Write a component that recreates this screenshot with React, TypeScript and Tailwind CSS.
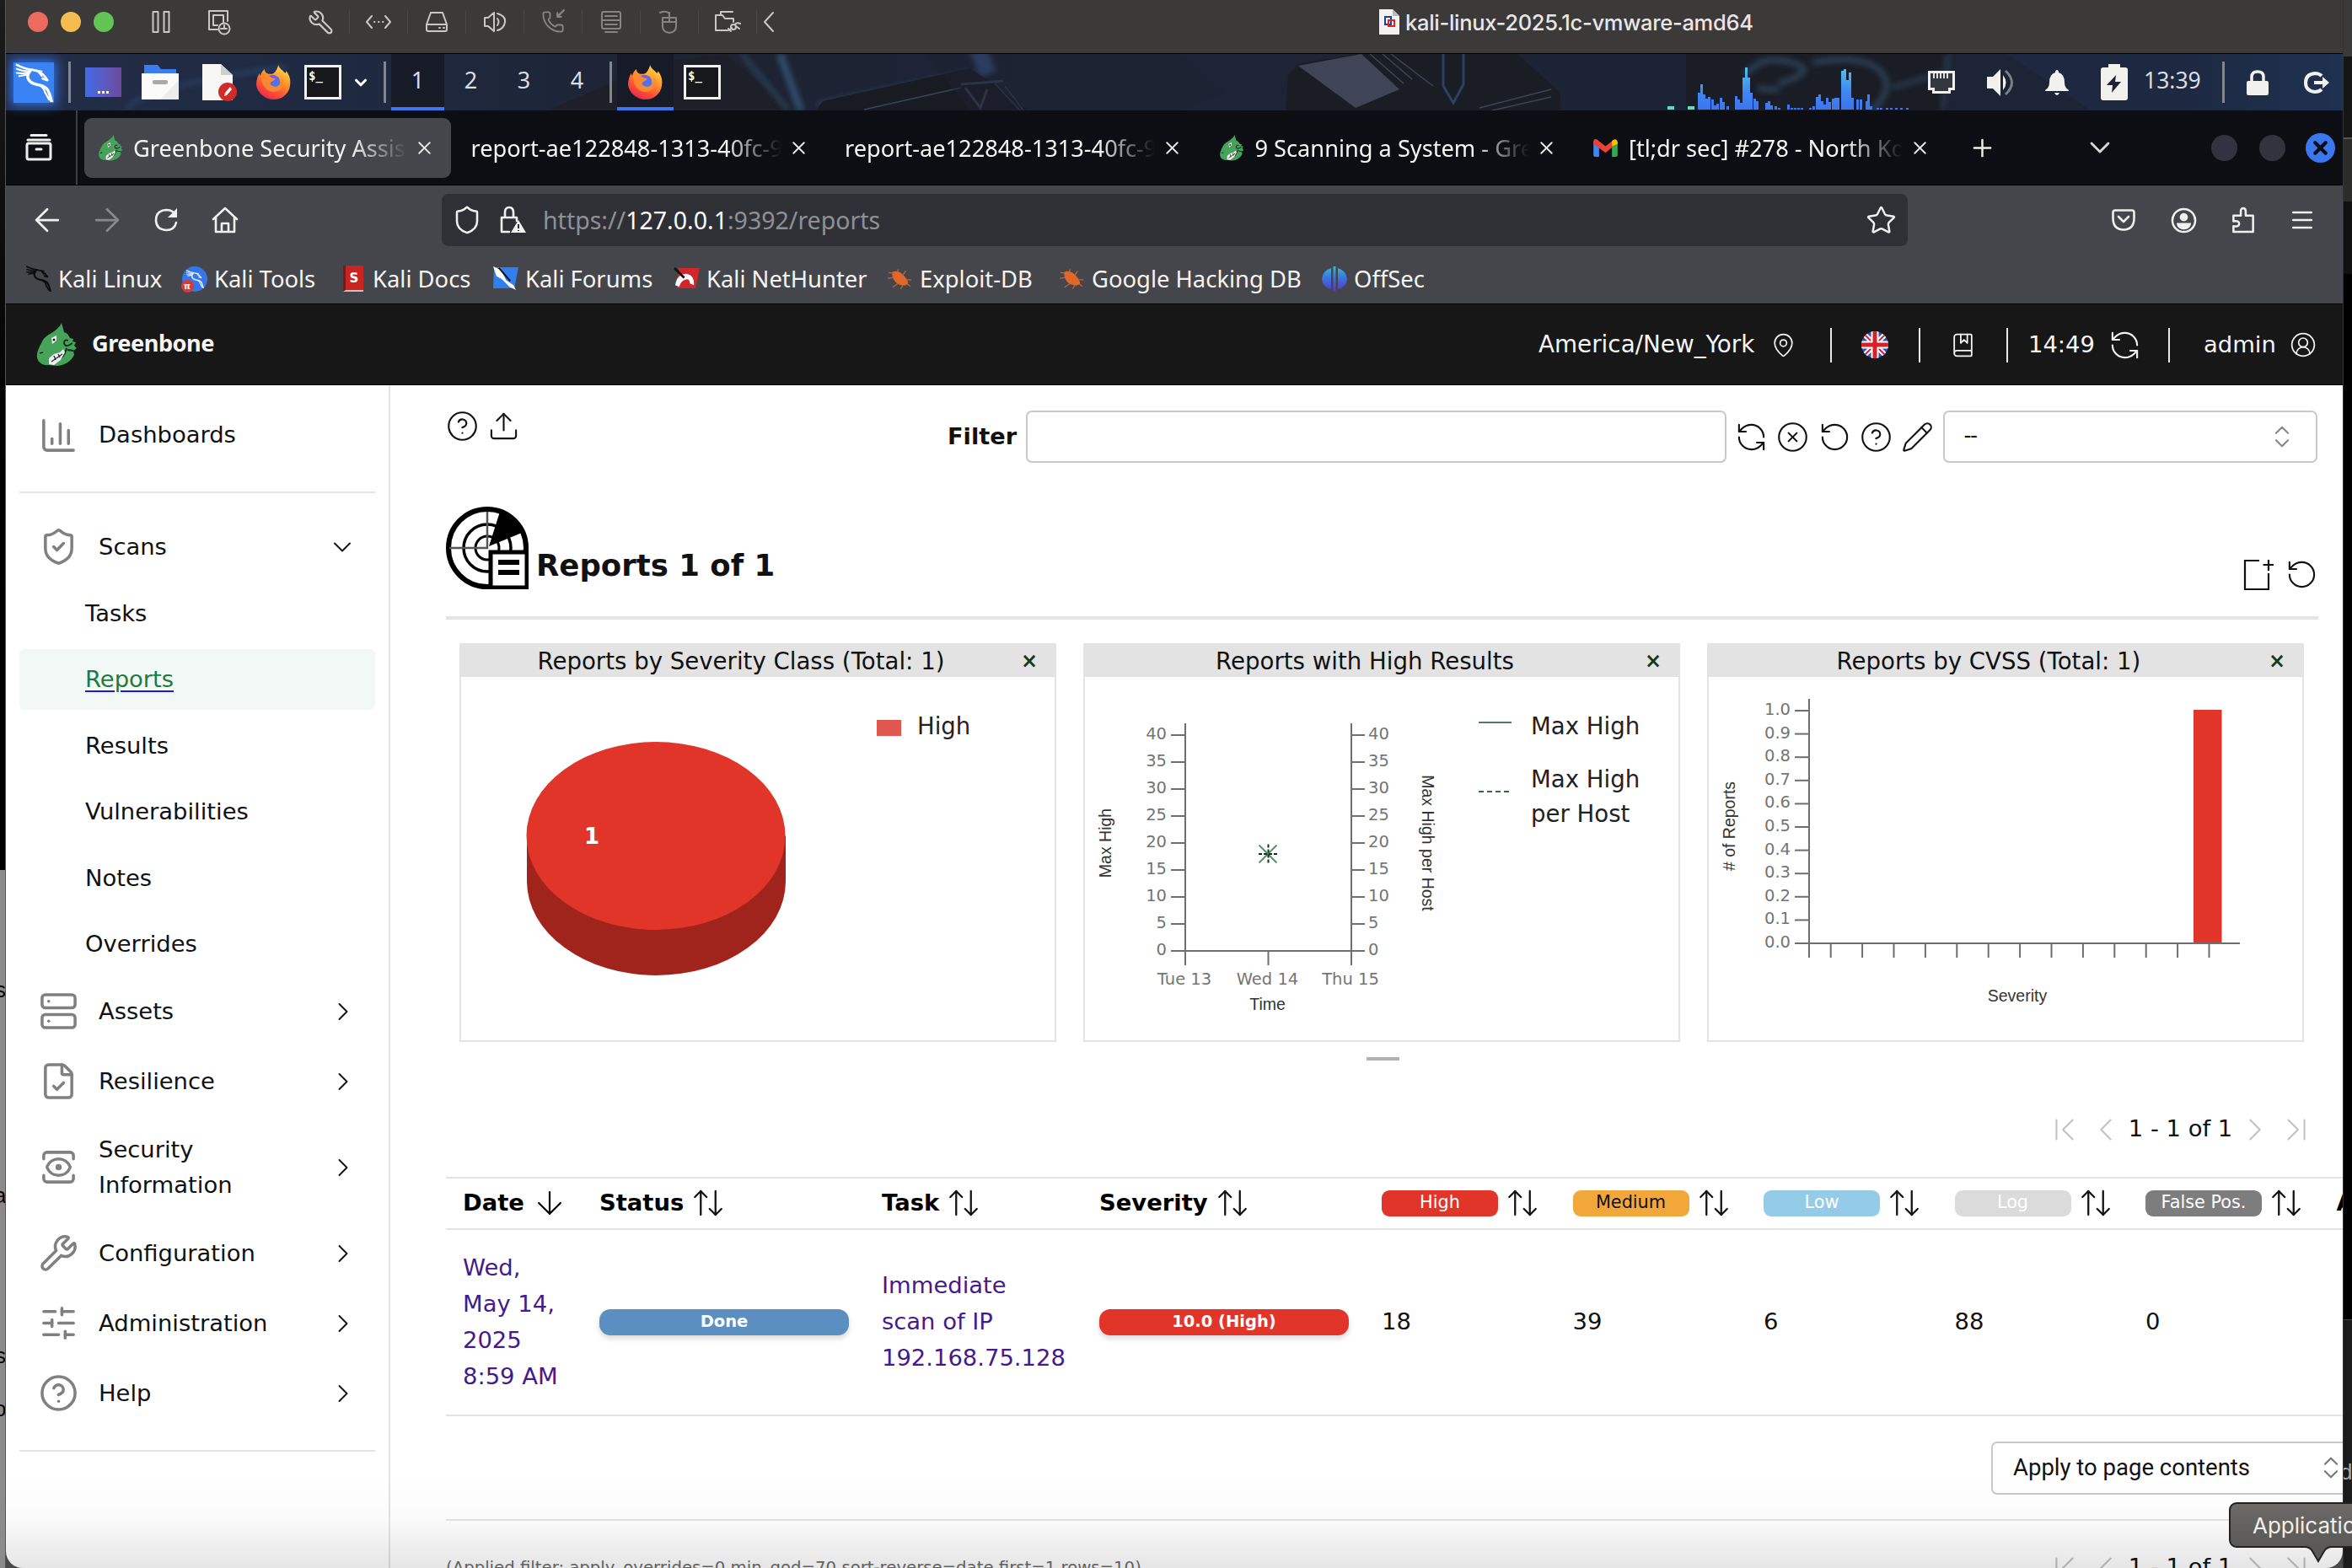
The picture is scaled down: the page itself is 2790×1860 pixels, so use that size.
import React from "react";
import {
  ArrowDown, ArrowLeft, ArrowRight, ArrowUpDown, ChartColumn, ChevronDown, ChevronFirst, ChevronLast,
  ChevronLeft, ChevronRight, ChevronsUpDown, CircleQuestionMark, CircleUserRound, CircleX, FileCheck,
  MapPin, Pencil, Phone, Plus, RefreshCcw, RotateCcw, Server, ShieldCheck, SlidersHorizontal, Star,
  Upload, View, Wrench, X, Shield, BookMarked,
} from "lucide-react";

const DEJAVU = "font-['DejaVu_Sans',sans-serif]";
const NOTO = "font-['Noto_Sans',sans-serif]";

/* ---------- drawn logos ---------- */

function KaliDragon({ className }: { className: string }) {
  return (
    <svg viewBox="0 0 48 48" className={className} fill="none" stroke="currentColor" strokeLinecap="round" strokeLinejoin="round">
      <path d="M3 2Q12 7 22 8L30 10Q37 14 41 21L35 19" strokeWidth="2.800" />
      <path d="M3 7Q10 10 18 10M3 12Q9 13 17 12M6 16Q10 15 16 14" strokeWidth="2.200" />
      <path d="M28 9l6 1M30 11l4 5" strokeWidth="2" />
      <path d="M20 9Q13 17 20 23 24 26 31 27 41 29 43 37 45 42 46 47" strokeWidth="3.600" />
      <path d="M31 27Q37 31 38 36L43 45" strokeWidth="2.400" />
    </svg>
  );
}

function Dragon({ className }: { className: string }) {
  return (
    <svg viewBox="0 0 48 52" className={className}>
      <path d="M30 0 33 11 37 13 40 18 44 19 43 22 47 23 45 27 48 30 44 33 45 38C42 45 33 51 24 51L15 50C8 51 2 47 1 41 0 33 5 27 8 20 13 13 26 10 30 0Z" fill="#46a35a" />
      <path d="M38 21Q33 19 33 24q1 4 5 3M36 30Q34 40 24 46M43 24l-5 3M44 33l-7-1" fill="none" stroke="#14241a" strokeWidth="1.800" />
      <path d="M18 18l6-3 0 6-5 4z" fill="#f4f4f4" />
      <circle cx="21" cy="20" r="1.500" fill="#111" />
      <path d="M15 42 21 37 28 35 32 31 34 35 29 44 21 50 15 49Z" fill="#f0f0f0" />
      <path d="M18 46 31 37M21 39l2 5M26 37l2 4" stroke="#333" strokeWidth="1.500" />
      <path d="M4 36l4-1" stroke="#14241a" strokeWidth="1.600" />
    </svg>
  );
}

function Firefox({ className, id }: { className: string; id: string }) {
  return (
    <svg viewBox="0 0 42 42" className={className}>
      <defs>
        <linearGradient id={id + "a"} x1="0.85" y1="0" x2="0.3" y2="1">
          <stop offset="0" stopColor="#ffe14d" />
          <stop offset="0.4" stopColor="#ff9a2e" />
          <stop offset="0.7" stopColor="#ff5535" />
          <stop offset="1" stopColor="#e8264f" />
        </linearGradient>
        <linearGradient id={id + "b"} x1="0" y1="0" x2="0.6" y2="1">
          <stop offset="0" stopColor="#8a52e8" />
          <stop offset="1" stopColor="#3b7df0" />
        </linearGradient>
      </defs>
      <path d="M27 0c1 5 5 6 8 10 2-1 1-3 1-3 5 6 6 12 5 18-1 10-10 17-20 17S1 34 0 24C0 18 2 13 4 10c0 2 1 3 1 3 1-4 4-7 5-8 0 3 2 5 5 6h3c3 0 6-2 9-11Z" fill={"url(#" + id + "a)"} />
      <circle cx="20" cy="21" r="9" fill={"url(#" + id + "b)"} />
      <path d="M6 13c4-2 8-1 12 2 2 1 4 1 5 2-1 3-5 3-6 5 0 3 4 5 8 4 5-2 8-7 5-12 5 5 4 12-1 16-6 5-15 3-19-3-3-4-4-9-4-14Z" fill="#ff8a2b" opacity="0.95" />
    </svg>
  );
}

function Terminal() {
  return (
    <div className="flex h-[41px] w-[44px] items-start border-[3px] border-[#f1f1ee] bg-[#17181b] pl-[2px] pt-[2px]">
      <span className="font-['DejaVu_Sans_Mono',monospace] text-[14px] font-bold leading-[16px] text-white">$_</span>
    </div>
  );
}

function Flag() {
  return (
    <svg viewBox="0 0 32 32" className="h-[32px] w-[32px]">
      <clipPath id="uk"><circle cx="16" cy="16" r="16" /></clipPath>
      <g clipPath="url(#uk)">
        <rect width="32" height="32" fill="#2e56b5" />
        <path d="M0 0 32 32M32 0 0 32" stroke="#fff" strokeWidth="6" />
        <path d="M0 0 32 32M32 0 0 32" stroke="#d8202c" strokeWidth="2" />
        <path d="M16 0v32M0 16h32" stroke="#fff" strokeWidth="9" />
        <path d="M16 0v32M0 16h32" stroke="#d8202c" strokeWidth="5" />
      </g>
    </svg>
  );
}

function Gmail() {
  return (
    <svg viewBox="0 0 30 22" className="h-[21px] w-[29px]">
      <path d="M0 3v17a2 2 0 0 0 2 2h5V9Z" fill="#4285f4" />
      <path d="M30 3v17a2 2 0 0 1-2 2h-5V9Z" fill="#34a853" />
      <path d="M0 3C0 0 3-1 5 1l10 8L25 1v8l-10 8L0 6Z" fill="#ea4335" />
      <path d="M23 9V2l2-1c2-2 5 0 5 3v2Z" fill="#fbbc04" />
    </svg>
  );
}

/* ---------- VM title bar ---------- */

const line = { fill: "none", stroke: "currentColor", strokeWidth: 2, strokeLinecap: "round" as const, strokeLinejoin: "round" as const };

function ToolSlot({ children, dim }: { children: React.ReactNode; dim?: boolean }) {
  return (
    <div className={"flex h-[28px] w-[69px] items-center justify-center border-r border-[#4a4848] " + (dim ? "text-[#858383]" : "text-[#c9c7c7]")}>
      {children}
    </div>
  );
}

function TitleBar() {
  return (
    <header className="flex h-[63px] items-start bg-[#3c3939] pt-[12px] text-[#c9c7c7]">
      <div className="ml-[26px] mt-[2px] flex gap-[15px]">
        <i className="block h-[24px] w-[24px] rounded-full bg-[#ed6a5e]" />
        <i className="block h-[24px] w-[24px] rounded-full bg-[#f5bd4f]" />
        <i className="block h-[24px] w-[24px] rounded-full bg-[#61c454]" />
      </div>
      <div className="flex w-[111px] justify-center">
        <svg viewBox="0 0 22 28" className="h-[28px] w-[22px]"><path {...line} d="M1.500 2h6v24h-6zM14.500 2h6v24h-6z" /></svg>
      </div>
      <svg viewBox="0 0 28 30" className="h-[30px] w-[28px]">
        <path {...line} d="M12 23H2V1h22v12M7 6h12v9M7 6v12h5" />
        <circle {...line} cx="20" cy="22" r="6.500" /><path {...line} d="M20 18v4h3M16 22h3" />
      </svg>
      <div className="ml-[72px] flex items-center">
        <ToolSlot><Wrench className="h-[31px] w-[31px] -scale-x-100" strokeWidth={1.7} /></ToolSlot>
        <ToolSlot><svg viewBox="0 0 30 20" className="h-[20px] w-[30px]"><path {...line} d="M7 3 1 10l6 7M23 3l6 7-6 7M10 10h.5M15 10h.5M20 10h.5" /></svg></ToolSlot>
        <ToolSlot><svg viewBox="0 0 28 26" className="h-[26px] w-[28px]"><path {...line} d="M7 2h14l5 14H2ZM2 16v6q0 2 2 2h20q2 0 2-2v-6M17 20h1M22 20h1" /></svg></ToolSlot>
        <ToolSlot><svg viewBox="0 0 28 26" className="h-[26px] w-[28px]"><path {...line} d="M2 8h4l7-6v22l-7-6H2ZM17 9q3 4 0 8M17 3q10 3 9 10-1 8-9 10" /></svg></ToolSlot>
        <ToolSlot dim><div className="relative"><Phone className="h-[28px] w-[28px]" strokeWidth={1.6} /><svg viewBox="0 0 10 10" className="absolute -top-px right-0 h-[11px] w-[11px]"><path {...line} d="M2 8 9 1M2 4v4h4" /></svg></div></ToolSlot>
        <ToolSlot dim><svg viewBox="0 0 26 26" className="h-[26px] w-[26px]"><path {...line} d="M4 1h18q2 0 2 2v16q0 2-2 2H4q-2 0-2-2V3q0-2 2-2ZM6 6h14M2 11h22M6 16h14M6 25h14" /></svg></ToolSlot>
        <ToolSlot dim><svg viewBox="0 0 24 28" className="h-[28px] w-[24px]"><path {...line} d="M4 14V9h16v10q0 7-8 8-8-1-8-8v-5h16M12 14V3M12 4Q8 0 1 3" /></svg></ToolSlot>
        <ToolSlot><svg viewBox="0 0 32 26" className="h-[26px] w-[32px]"><path {...line} d="M14 23H2V5h8l3 4h10v4M8 5V1h14M31 15q-4-2-6 1M15 23q5 0 6-3M26 18l4 3M17 21l3 3" /><circle {...line} cx="23" cy="19" r="3" /></svg></ToolSlot>
        <svg viewBox="0 0 14 26" className="ml-[7px] h-[26px] w-[14px]"><path {...line} d="M12 2 2 13l10 11" /></svg>
      </div>
      <div className="-mt-[2px] ml-[717px] flex items-center">
        <svg viewBox="0 0 24 30" className="h-[30px] w-[24px]">
          <path d="M0 0h16l8 8v22H0Z" fill="#f2f2f2" /><path d="M16 0v8h8Z" fill="#bbb" />
          <path d="M7 9h7v9H7z" fill="none" stroke="#1c3fa5" strokeWidth="2" /><path d="M11 13h7v7h-7z" fill="none" stroke="#e0261f" strokeWidth="2" />
        </svg>
        <span className="ml-[7px] pt-[2px] font-['Inter',sans-serif] text-[25.5px] font-medium leading-[30px] tracking-[-0.3px] text-[#e8e6e6]">kali-linux-2025.1c-vmware-amd64</span>
      </div>
    </header>
  );
}

/* ---------- desktop panel ---------- */

const cpu: [number, number][] = [
  [36, 20], [39, 30], [42, 18], [45, 13], [48, 15], [52, 12], [55, 5], [58, 7], [62, 14], [65, 9], [70, 4],
  [80, 16], [83, 12], [86, 8], [89, 38], [92, 50], [95, 38], [98, 20], [102, 13], [105, 10],
  [116, 8], [119, 10], [122, 5], [127, 4], [131, 2], [142, 6], [146, 2], [150, 2], [154, 2], [158, 2],
  [168, 2], [172, 4], [176, 15], [179, 18], [182, 10], [185, 6], [188, 14], [191, 9], [195, 13], [198, 14],
  [201, 14], [206, 46], [209, 48], [212, 35], [215, 44], [218, 14], [224, 12], [228, 12], [235, 10], [237, 18], [240, 4],
  [248, 2], [252, 2], [259, 2], [264, 2], [270, 2], [276, 2], [283, 2],
];

function Sep() {
  return <i className="block h-[49px] w-[3px] bg-[#85868c]" />;
}

function PanelArt() {
  return (
    <svg viewBox="7 0 2772 67" className="absolute inset-0 h-full w-full" preserveAspectRatio="none">
      <defs>
        <linearGradient id="pa" x1="0" x2="1">
          <stop offset="0" stopColor="#232d47" /><stop offset="0.12" stopColor="#1f2a42" /><stop offset="0.3" stopColor="#1d2333" />
          <stop offset="0.5" stopColor="#1e2435" /><stop offset="0.75" stopColor="#1c2334" /><stop offset="0.93" stopColor="#1c2436" /><stop offset="1" stopColor="#213556" />
        </linearGradient>
        <filter id="soft"><feGaussianBlur stdDeviation="3" /></filter>
      </defs>
      <rect x="7" width="2772" height="67" fill="url(#pa)" />
      <path d="M650 67 780 10 860 0 940 67Z" fill="#1d2029" />
      <g filter="url(#soft)">
        <path d="M880 0 935 67" stroke="#2c4159" strokeWidth="5" />
        <path d="M150 67Q160 40 340 15" stroke="#2a3d60" strokeWidth="5" fill="none" />
        <path d="M925 0 950 67" stroke="#33506f" strokeWidth="8" />
        <path d="M1160 -5 1172 24" stroke="#38568a" strokeWidth="20" />
        <path d="M970 60 1150 22" stroke="#2b4467" strokeWidth="5" />
      </g>
      <path d="M968 67 976 56 1150 17 1186 40 1220 67Z" fill="#191b22" />
      <path d="M1025 66 1140 40M1180 35l30 32M1192 38l22 29" stroke="#34455f" strokeWidth="1.500" />
      <path d="M1140 36l50-4M1145 40l18 24 8-22" stroke="#3a4458" strokeWidth="3" fill="none" />
      <path d="M1398 0 1454 46 1400 67H1150L1100 0Z" fill="#1d2132" opacity="0.5" />
      <path d="M1525 67 1528 25 1540 12 1610 0H1800L1850 45 1852 67Z" fill="#1b1d24" />
      <path d="M1540 14 1615 0 1660 42 1608 64Z" fill="#3f4556" />
      <path d="M1625 0 1665 35M1640 0l35 30M1650 0l50 38M1755 64l85-22M1770 67l70-16" stroke="#3c4558" strokeWidth="1.500" />
      <path d="M1712 0v38l12 20 12-22V0" stroke="#2b4065" strokeWidth="3" fill="none" />
      <path d="M2000 0h310v67h-310Z" fill="#1a1d26" />
      <g filter="url(#soft)">
        <path d="M2070 25q20-25 55-15t-15 25M2150 10q60-10 80 10t-10 47M2085 40q20 5 25 0" stroke="#2b3d52" strokeWidth="7" fill="none" />
        <path d="M2245 40l60-18M2310 0l-5 67" stroke="#2a3b50" strokeWidth="5" />
      </g>
      <path d="M2380 0 2480 67H2779V0Z" fill="#1e2d4b" opacity="0.5" />
    </svg>
  );
}

function Panel() {
  return (
    <div className="relative h-[67px] bg-[#1d2333]">
      <PanelArt />
      <div className="relative flex h-full items-center pl-[9px]">
        <div className="flex h-[48px] w-[48px] items-center justify-center bg-[#3a83f5] shadow-[0_0_12px_3px_#2f6fe0]">
          <KaliDragon className="h-[46px] w-[46px] text-white" />
        </div>
        <div className="ml-[17px]"><Sep /></div>
        <div className="ml-[17px] flex h-[35px] w-[43px] items-end justify-center bg-gradient-to-r from-[#3e6be8] to-[#6a4a9c] pb-[4px]">
          <span className="flex gap-[2px]"><i className="block h-[3px] w-[3px] bg-white" /><i className="block h-[3px] w-[3px] bg-white" /><i className="block h-[3px] w-[3px] bg-white" /></span>
        </div>
        <svg viewBox="0 0 44 41" className="ml-[24px] h-[41px] w-[44px]">
          <path d="M3 0h16l4 5h18v8H3Z" fill="#3b7cf0" /><path d="M0 10h44v31H0Z" fill="#fbfbfa" /><path d="M44 18v23H22Z" fill="#ececea" />
          <rect x="13" y="18" width="18" height="5" rx="2" fill="#a9a9a9" />
        </svg>
        <svg viewBox="0 0 41 44" className="ml-[28px] h-[44px] w-[41px]">
          <path d="M0 0h22l14 13v30H0Z" fill="#f7f7f5" /><path d="M22 0v13h14Z" fill="#cfcfcd" />
          <circle cx="30" cy="33" r="11" fill="#d22a26" /><path d="M26 38l1-4 6-7 2 3-6 7Z" fill="#fff" />
        </svg>
        <Firefox id="f1" className="ml-[23px] h-[43px] w-[41px]" />
        <div className="ml-[16px]"><Terminal /></div>
        <ChevronDown className="ml-[12px] h-[22px] w-[22px] text-white" strokeWidth={3.4} />
        <div className="ml-[16px]"><Sep /></div>
        <div className={"ml-[6px] flex h-full text-[27px] text-[#dcdde0] " + NOTO}>
          <span className="flex w-[63px] items-center justify-center border-b-4 border-[#3b78f0] bg-[#171b28]">1</span>
          <span className="flex w-[63px] items-center justify-center pb-[4px]">2</span>
          <span className="flex w-[63px] items-center justify-center pb-[4px]">3</span>
          <span className="flex w-[63px] items-center justify-center pb-[4px]">4</span>
        </div>
        <div className="ml-[7px]"><Sep /></div>
        <div className="ml-[6px] flex h-full w-[67px] items-center justify-center border-b-4 border-[#3b78f0] bg-[#171b28] pt-[3px]">
          <Firefox id="f2" className="h-[43px] w-[41px]" />
        </div>
        <div className="ml-[12px]"><Terminal /></div>
        <svg viewBox="0 0 290 67" className="ml-auto h-[67px] w-[290px]">
          <defs>
            <linearGradient id="cpu" x1="0" x2="0" y1="14" y2="66" gradientUnits="userSpaceOnUse">
              <stop offset="0" stopColor="#54c6ea" /><stop offset="0.6" stopColor="#3f86f2" /><stop offset="1" stopColor="#3d74ee" />
            </linearGradient>
          </defs>
          <path d="M0 62h8v4H0zM24 62h8v4h-8z" fill="#5be0c4" />
          {cpu.map(([x, h]) => <rect key={x} x={x} y={66 - h} width="3" height={h} fill="url(#cpu)" />)}
        </svg>
        <svg viewBox="0 0 32 27" className="ml-[19px] h-[27px] w-[32px]">
          <path d="M1.500 1.500h29v20h-5v4H6.500v-4h-5Z" fill="#33373f" stroke="#f1f1ee" strokeWidth="3" />
          <path d="M7 3v6M11 3v6M15 3v6M19 3v6M23 3v6" stroke="#f1f1ee" strokeWidth="1.800" />
        </svg>
        <svg viewBox="0 0 38 32" className="ml-[36px] h-[32px] w-[38px]">
          <path d="M2 9h7L18 0v32L9 23H2Z" fill="#f1f1ee" /><path d="M21 7q7 9 0 18" fill="#f1f1ee" /><path d="M24 2q15 14 0 28" stroke="#7b7f88" strokeWidth="3" fill="none" />
        </svg>
        <svg viewBox="0 0 28 30" className="ml-[33px] h-[30px] w-[28px]">
          <path d="M14 0q2 0 2 3 7 2 7 12 0 6 5 9v1H0v-1q5-3 5-9Q5 5 12 3q0-3 2-3ZM11 27h6q-1 3-3 3t-3-3Z" fill="#f1f1ee" />
        </svg>
        <svg viewBox="0 0 32 43" className="ml-[38px] h-[43px] w-[32px]">
          <path d="M9 0h14v4h6q3 0 3 3v33q0 3-3 3H3q-3 0-3-3V7q0-3 3-3h6Z" fill="#f1f1ee" /><path d="M18 13 7 25h7l-1 9 11-13h-7Z" fill="#1d2333" />
        </svg>
        <span className={"ml-[19px] w-[67px] whitespace-nowrap pb-[3px] text-[26.5px] text-[#dcdde0] " + NOTO}>13:39</span>
        <div className="ml-[26px]"><Sep /></div>
        <svg viewBox="0 0 26 30" className="ml-[26px] h-[30px] w-[26px]">
          <path d="M6 14V8q0-6 7-6t7 6v6" stroke="#f1f1ee" strokeWidth="3.500" fill="none" /><rect y="13" width="26" height="17" rx="2" fill="#f1f1ee" />
        </svg>
        <svg viewBox="0 0 30 26" className="ml-[42px] mr-[16px] h-[26px] w-[30px]">
          <path d="M21 5Q18 2 13 2 2 3 2 13t11 11q5 0 8-3" stroke="#f1f1ee" strokeWidth="4" fill="none" /><path d="M12 11h10V6l8 7-8 7v-5H12Z" fill="#f1f1ee" />
        </svg>
      </div>
    </div>
  );
}

/* ---------- browser chrome ---------- */

function Tab({ active, icon, title }: { active?: boolean; icon?: React.ReactNode; title: string }) {
  return (
    <div className={"flex h-[71px] w-[435px] shrink-0 items-center rounded-[9px] pl-[15px] " + (active ? "bg-[#45464b]" : "")}>
      {icon && <span className="mr-[12px] flex w-[31px] justify-center">{icon}</span>}
      <span className="min-w-0 flex-1 overflow-hidden whitespace-nowrap pt-[2px] text-[27.2px] text-[#f4f4f2] [mask-image:linear-gradient(to_right,#000_calc(100%-70px),transparent_calc(100%-4px))]">{title}</span>
      <X className="ml-[4px] mr-[19px] h-[25px] w-[25px] shrink-0 text-[#e8e8e6]" strokeWidth={1.8} />
    </div>
  );
}

function TabBar() {
  return (
    <div className={"flex h-[88px] items-center bg-[#0c0e13] " + NOTO}>
      <svg viewBox="0 0 32 32" className="ml-[23px] h-[32px] w-[32px] text-[#eeeeec]">
        <path {...line} strokeWidth={3} d="M7 1.500h18M3 7h26M4 11h24q2 0 2 2v15q0 2-2 2H4q-2 0-2-2V13q0-2 2-2ZM13 18h6" />
      </svg>
      <i className="ml-[28px] h-full w-[2px] bg-[#3c3e43]" />
      <div className="ml-[8px] flex gap-[8.5px]">
        <Tab active icon={<Dragon className="h-[31px] w-[30px]" />} title="Greenbone Security Assist" />
        <Tab title="report-ae122848-1313-40fc-9" />
        <Tab title="report-ae122848-1313-40fc-9" />
        <Tab icon={<Dragon className="h-[31px] w-[30px]" />} title="9 Scanning a System - Gree" />
        <Tab icon={<Gmail />} title="[tl;dr sec] #278 - North Ko" />
      </div>
      <Plus className="ml-[26px] h-[33px] w-[33px] text-[#eeeeec]" strokeWidth={1.8} />
      <ChevronDown className="ml-[103px] h-[40px] w-[40px] text-[#d8d8d6]" strokeWidth={1.7} />
      <i className="ml-[112px] block h-[31px] w-[31px] rounded-full bg-[#31343f]" />
      <i className="ml-[26px] block h-[31px] w-[31px] rounded-full bg-[#31343f]" />
      <span className="ml-[24px] flex h-[35px] w-[35px] items-center justify-center rounded-full bg-[#3b78f0]">
        <X className="h-[25px] w-[25px] text-[#0c0e13]" strokeWidth={4} />
      </span>
    </div>
  );
}

function Toolbar() {
  return (
    <div className={"flex h-[82px] items-center text-[#f0f0ee] " + NOTO}>
      <ArrowLeft className="ml-[27px] h-[44px] w-[44px]" strokeWidth={1.5} />
      <ArrowRight className="ml-[27px] h-[44px] w-[44px] text-[#88898d]" strokeWidth={1.5} />
      <svg viewBox="0 0 30 30" className="ml-[33px] h-[30px] w-[30px]">
        <path {...line} strokeWidth={2.6} d="M26 8Q22 3 15 3 3 4 3 15t12 12q10 0 12-9" /><path d="M28 1v11H17Z" fill="currentColor" />
      </svg>
      <svg viewBox="0 0 32 32" className="ml-[39px] h-[32px] w-[32px]">
        <path {...line} strokeWidth={2.6} d="M2 15 16 2l14 13M5 13v17h22V13M12 30V20h8v10" />
      </svg>
      <div className="ml-[241px] flex h-[62px] w-[1739px] items-center rounded-[8px] bg-[#2f3035]">
        <Shield className="ml-[12px] h-[36px] w-[36px]" strokeWidth={1.7} />
        <svg viewBox="0 0 32 34" className="ml-[20px] h-[34px] w-[32px]">
          <path {...line} strokeWidth={2.600} d="M7 14V8q0-6 5-6t5 6v6M12 31H3V14h18v4" /><path d="M23 17l9 15H14Z" fill="currentColor" /><path d="M23 22v5M23 29v1" stroke="#2f3035" strokeWidth="2" />
        </svg>
        <span className="ml-[20px] text-[28.5px] text-[#8f9095]">https://<b className="font-normal text-[#fbfbfe]">127.0.0.1</b>:9392/reports</span>
        <Star className="ml-auto mr-[13px] h-[37px] w-[37px]" strokeWidth={1.6} />
      </div>
      <svg viewBox="0 0 28 26" className="ml-[242px] h-[26px] w-[28px]">
        <path {...line} strokeWidth={2.600} d="M4 1.500h20q2.500 0 2.500 2.500v7q0 13-12.500 13.500Q1.500 24 1.500 11V4q0-2.500 2.500-2.500ZM8 9l6 6 6-6" />
      </svg>
      <svg viewBox="0 0 32 32" className="ml-[42px] h-[31px] w-[31px]">
        <circle {...line} strokeWidth={2.600} cx="16" cy="16" r="14" /><circle cx="16" cy="12" r="5" fill="currentColor" /><path d="M7 19h18q-1 8-9 8t-9-8Z" fill="currentColor" />
      </svg>
      <svg viewBox="0 0 30 34" className="ml-[40px] h-[33px] w-[30px]">
        <path {...line} strokeWidth={2.600} d="M12 11V6q0-4 3-4t3 4v5h9v20H3v-7q7 1 7-3t-7-3v-7Z" />
      </svg>
      <svg viewBox="0 0 24 22" className="ml-[43px] h-[22px] w-[24px]"><path {...line} strokeWidth={2.400} d="M1 2h22M1 11h22M1 20h22" /></svg>
    </div>
  );
}

function Bug() {
  return (
    <svg viewBox="0 0 30 24" className="h-[24px] w-[29px]">
      <path d="M6 3Q13 1 18 6q7 6 7 12l-4 2Q13 20 9 15 4 9 6 3Z" fill="#e0662a" />
      <path d="M7 5 1 4M8 10 0 11M12 18 6 22M19 19l-3 5M12 3l1-3M19 7l3-5M23 13l6 0M24 18l4 3" stroke="#c9622f" strokeWidth="1.300" />
    </svg>
  );
}

const bookmarks: { label: string; icon: React.ReactNode; cls: string }[] = [
  { label: "Kali Linux", cls: "w-[185px]", icon: <KaliDragon className="h-[31px] w-[31px] text-[#0c0c0c]" /> },
  {
    label: "Kali Tools", cls: "w-[188px]", icon: (
      <span className="relative flex h-[30px] w-[30px] items-center justify-center rounded-full bg-[#3577e8]"><KaliDragon className="h-[22px] w-[22px] text-[#dce9ff]" />
        <i className="absolute -bottom-px -left-px flex h-[15px] w-[15px] items-center justify-center rounded-full bg-[#d83a35] font-['DejaVu_Sans',sans-serif] text-[10px] font-bold not-italic text-white">π</i></span>),
  },
  { label: "Kali Docs", cls: "w-[181px]", icon: <span className="flex h-[31px] w-[24px] items-center justify-center border-b-2 border-l-[3px] border-b-[#dfb7b5] border-l-[#7c1717] bg-[#c82420] font-['DejaVu_Sans',sans-serif] text-[15px] font-bold text-white">S</span> },
  { label: "Kali Forums", cls: "w-[215px]", icon: <svg viewBox="0 0 32 30" className="h-[29px] w-[32px]"><path d="M2 1h30l-5 26H1Z" fill="#2f7fee" /><path d="M1 0l10 5 6 12 9 6 3 6-8-4-9-9L5 12Z" fill="#fff" /><path d="M8 2l14 16" stroke="#111" strokeWidth="2" /></svg> },
  { label: "Kali NetHunter", cls: "w-[253px]", icon: <svg viewBox="0 0 32 28" className="h-[27px] w-[31px]"><path d="M6 1h26l-5 25H4Z" fill="#d5242c" /><path d="M2 22Q4 8 16 8q10 2 9 14l-5-2q0-6-5-5-6 1-8 9Z" fill="#fff" /><path d="M1 1l12 12" stroke="#111" strokeWidth="3" /></svg> },
  { label: "Exploit-DB", cls: "w-[204px]", icon: <Bug /> },
  { label: "Google Hacking DB", cls: "w-[311px]", icon: <Bug /> },
  { label: "OffSec", cls: "w-[140px]", icon: <svg viewBox="0 0 30 30" className="h-[30px] w-[30px]"><defs><linearGradient id="os" x1="0" x2="0" y1="0" y2="1"><stop offset="0" stopColor="#3fb6cf" /><stop offset="0.5" stopColor="#3a6fe0" /><stop offset="1" stopColor="#5b35c8" /></linearGradient></defs><path d="M11 2v25Q1 25 0 15 1 5 11 2ZM19 2v25q10-2 11-12Q29 5 19 2ZM13.500 0h3v30h-3z" fill="url(#os)" /></svg> },
];

function Bookmarks() {
  return (
    <div className={"flex h-[58px] items-center pl-[23px] text-[27.4px] text-[#f4f4f2] " + NOTO}>
      {bookmarks.map((b) => (
        <div key={b.label} className={"flex shrink-0 items-center whitespace-nowrap " + b.cls}>
          <span className="mr-[8px] flex w-[31px] shrink-0 justify-center">{b.icon}</span>{b.label}
        </div>
      ))}
    </div>
  );
}

/* ---------- Greenbone app ---------- */

function AppHeader() {
  const bar = "block h-[41px] w-[2px] bg-[#e8e8e8]";
  return (
    <div className={"flex h-[95px] items-center bg-[#171717] text-[27.8px] text-[#f5f5f5] " + DEJAVU}>
      <Dragon className="ml-[36px] h-[52px] w-[48px]" />
      <span className={"ml-[18px] pb-[3px] text-[27.2px] font-bold tracking-[-0.5px] " + NOTO}>Greenbone</span>
      <div className="ml-auto flex items-center pt-px">
        <span className="w-[257px] whitespace-nowrap">America/New_York</span>
        <MapPin className="ml-[18px] h-[31px] w-[31px]" strokeWidth={1.3} />
        <i className={"ml-[40px] " + bar} />
        <span className="ml-[35px]"><Flag /></span>
        <i className={"ml-[36px] " + bar} />
        <BookMarked className="ml-[35px] h-[31px] w-[31px]" strokeWidth={1.4} />
        <i className={"ml-[36px] " + bar} />
        <span className="ml-[24px] w-[78px] whitespace-nowrap text-[27.4px]">14:49</span>
        <RefreshCcw className="ml-[17px] h-[39px] w-[39px]" strokeWidth={1.3} />
        <i className={"ml-[32px] " + bar} />
        <span className="ml-[40px] w-[86px] text-[27.4px]">admin</span>
        <CircleUserRound className="ml-[16px] mr-[31px] h-[32px] w-[32px]" strokeWidth={1.3} />
      </div>
    </div>
  );
}

function NavRow({ icon: Icon, label, open, h = "h-[83px]" }: { icon: React.ElementType; label: React.ReactNode; open?: boolean; h?: string }) {
  return (
    <div className={"flex items-center pl-[23px] " + h}>
      <Icon className="h-[47px] w-[47px] text-[#808080]" strokeWidth={1.8} />
      <span className="ml-[24px] leading-[41.500px]">{label}</span>
      {open ? <ChevronDown className="ml-auto mr-[21px] h-[36px] w-[36px]" strokeWidth={1.3} /> : <ChevronRight className="ml-auto mr-[20px] h-[36px] w-[36px]" strokeWidth={1.3} />}
    </div>
  );
}

function SubRow({ label, active }: { label: string; active?: boolean }) {
  return (
    <div className={"mb-[6px] flex h-[72.5px] items-center rounded-[6px] pl-[78px] " + (active ? "bg-[#f2f8f6]" : "")}>
      <span className={active ? "text-[#1f7a3c] underline decoration-[#1a1ae6] decoration-2 underline-offset-[4px]" : ""}>{label}</span>
    </div>
  );
}

function Sidebar() {
  return (
    <nav className="flex w-[456px] shrink-0 flex-col border-r-2 border-[#e3e3e3] px-[16px] text-[#111]">
      <div className="flex h-[128px] items-center border-b-2 border-[#e3e3e3] pb-[8px] pl-[23px]">
        <ChartColumn className="h-[47px] w-[47px] text-[#808080]" strokeWidth={1.8} />
        <span className="ml-[24px]">Dashboards</span>
      </div>
      <div className="mt-[22px]"><NavRow icon={ShieldCheck} label="Scans" open /></div>
      <div className="mt-px flex flex-col">
        <SubRow label="Tasks" />
        <SubRow label="Reports" active />
        <SubRow label="Results" />
        <SubRow label="Vulnerabilities" />
        <SubRow label="Notes" />
        <SubRow label="Overrides" />
      </div>
      <div className="-mt-[4px] flex flex-col">
        <NavRow icon={Server} label="Assets" />
        <NavRow icon={FileCheck} label="Resilience" />
        <NavRow icon={View} label={<>Security<br />Information</>} h="h-[121px]" />
        <NavRow icon={Wrench} label="Configuration" />
        <NavRow icon={SlidersHorizontal} label="Administration" />
        <NavRow icon={CircleQuestionMark} label="Help" />
      </div>
      <i className="mt-[26px] block h-[2px] bg-[#e3e3e3]" />
    </nav>
  );
}

function Card({ title, children }: { title: string; children: React.ReactNode }) {
  return (
    <section className="flex h-[473px] w-[708px] flex-col border-2 border-[#e3e3e3]">
      <div className="flex h-[38px] items-center bg-[#e3e3e3] text-[#111]">
        <span className="flex-1 pl-[20px] text-center text-[27.6px] leading-[37px]">{title}</span>
        <span className="w-[60px] text-center text-[24px] font-bold leading-[38px] text-[#143a20]">×</span>
      </div>
      {children}
    </section>
  );
}

const axisText = "font-['DejaVu_Sans',sans-serif] text-[19.5px]";
const axisTitle = "font-['Liberation_Sans',sans-serif] text-[19.5px]";

function Pie() {
  return (
    <svg viewBox="547 804 704 431" className="h-[431px] w-[704px]">
      <path d="M625 992.500v54a153.500 111.500 0 0 0 307 0v-54Z" fill="#a0241c" />
      <ellipse cx="778" cy="992.500" rx="153.500" ry="111.500" fill="#e2352a" />
      <text x="702" y="1002" textAnchor="middle" fill="#fff" className="font-['DejaVu_Sans',sans-serif] text-[26px] font-bold">1</text>
      <rect x="1040" y="855" width="29" height="19" fill="#e25650" />
      <text x="1088" y="872" fill="#222" className="font-['DejaVu_Sans',sans-serif] text-[27.5px]">High</text>
    </svg>
  );
}

function LineChart() {
  const ticks = [0, 5, 10, 15, 20, 25, 30, 35, 40];
  return (
    <svg viewBox="1288 804 704 431" className="h-[431px] w-[704px]">
      <g stroke="#6e6e6e" strokeWidth="2">
        <path d="M1407 859v287M1604 859v287M1390 1129h230M1505.500 1129v17" fill="none" />
        {ticks.map((t) => <path key={t} d={`M1390 ${1129 - t * 6.4}h17M1604 ${1129 - t * 6.4}h16`} />)}
      </g>
      <g fill="#757575" className={axisText}>
        {ticks.map((t) => (
          <React.Fragment key={t}>
            <text x="1385" y={1134 - t * 6.4} textAnchor="end">{t}</text>
            <text x="1624" y={1134 - t * 6.4}>{t}</text>
          </React.Fragment>
        ))}
        <text x="1406" y="1169" textAnchor="middle">Tue 13</text>
        <text x="1504.500" y="1169" textAnchor="middle">Wed 14</text>
        <text x="1603" y="1169" textAnchor="middle">Thu 15</text>
      </g>
      <g fill="#333" className={axisTitle} textAnchor="middle">
        <text x="1504.500" y="1199">Time</text>
        <text transform="translate(1319 1001) rotate(-90)">Max High</text>
        <text transform="translate(1688 1001) rotate(90)">Max High per Host</text>
      </g>
      <path d="M1494.500 1003.500l21 21M1515.500 1003.500l-21 21" stroke="#5d8e6b" strokeWidth="2" />
      <path d="M1494 1014h23M1505.500 1002.500v23" stroke="#11301a" strokeWidth="2" strokeDasharray="4 2" />
      <path d="M1755 858h39" stroke="#4a7d5a" strokeWidth="2" />
      <path d="M1755 940h39" stroke="#2f6a42" strokeWidth="2" strokeDasharray="6 4" />
      <g fill="#222" className="font-['DejaVu_Sans',sans-serif] text-[27.6px]">
        <text x="1817" y="872">Max High</text><text x="1817" y="935">Max High</text><text x="1817" y="976">per Host</text>
      </g>
    </svg>
  );
}

function BarChart() {
  const ticks = [0, 1, 2, 3, 4, 5, 6, 7, 8, 9, 10];
  const xs = [0, 1, 2, 3, 4, 5, 6, 7, 8, 9, 10, 11, 12];
  return (
    <svg viewBox="2027 804 704 431" className="h-[431px] w-[704px]">
      <rect x="2602" y="843" width="33.500" height="277" fill="#e2352a" />
      <g stroke="#6e6e6e" strokeWidth="2" fill="none">
        <path d="M2146 830v307M2129 1120h528" />
        {ticks.map((t) => <path key={t} d={`M2129 ${1120 - t * 27.6}h17`} />)}
        {xs.map((t) => <path key={t} d={`M${2171.7 + t * 37.4} 1120v17`} />)}
      </g>
      <g fill="#757575" className={axisText} textAnchor="end">
        {ticks.map((t) => <text key={t} x="2124" y={1125 - t * 27.6}>{(t / 10).toFixed(1)}</text>)}
      </g>
      <g fill="#333" className={axisTitle} textAnchor="middle">
        <text x="2393" y="1189">Severity</text>
        <text transform="translate(2058 981) rotate(-90)"># of Reports</text>
      </g>
    </svg>
  );
}

function Pagination() {
  return (
    <div className="flex h-[48px] items-center pl-[1896px] text-[#111]">
      <ChevronFirst className="ml-[1px] h-[46px] w-[46px] text-[#c2c2c2]" strokeWidth={1.1} />
      <ChevronLeft className="ml-[3px] h-[46px] w-[46px] text-[#c2c2c2]" strokeWidth={1.1} />
      <span className="ml-[3px] w-[125px] whitespace-nowrap pb-[3px] text-center">1 - 1 of 1</span>
      <ChevronRight className="ml-[3px] h-[46px] w-[46px] text-[#c2c2c2]" strokeWidth={1.1} />
      <ChevronLast className="ml-[3px] h-[46px] w-[46px] text-[#c2c2c2]" strokeWidth={1.1} />
    </div>
  );
}

function Sort() {
  return <ArrowUpDown className="ml-[8px] h-[42px] w-[42px] shrink-0 text-[#111]" strokeWidth={1.3} />;
}

const cols = "grid grid-cols-[182px_335px_258px_335px_226.5px_226.5px_226.5px_226.5px_226.5px_60px]";

const severityHeads = [
  { label: "High", cls: "bg-[#e2352a] text-white" },
  { label: "Medium", cls: "bg-[#f2a73b] text-[#111]" },
  { label: "Low", cls: "bg-[#93cbe8] text-white" },
  { label: "Log", cls: "bg-[#dbdbdb] text-white" },
  { label: "False Pos.", cls: "bg-[#7d7d7d] text-white" },
];

function Table() {
  return (
    <div className="w-[2250px] overflow-hidden border-t-2 border-[#e3e3e3]">
      <div className={"h-[61px] w-[2303px] items-center border-b-2 border-[#e3e3e3] pb-px font-bold text-black " + cols}>
        <span className="flex items-center pl-[20px]">Date<ArrowDown className="ml-[8px] h-[44px] w-[44px]" strokeWidth={1.2} /></span>
        <span className="flex items-center">Status<Sort /></span>
        <span className="flex items-center">Task<Sort /></span>
        <span className="flex items-center">Severity<Sort /></span>
        {severityHeads.map((s) => (
          <span key={s.label} className="flex items-center">
            <span className={"flex h-[31px] w-[138px] items-center justify-center rounded-[9px] text-[20.8px] font-normal " + s.cls}>{s.label}</span><Sort />
          </span>
        ))}
        <span>Actions</span>
      </div>
      <div className={"h-[221px] w-[2303px] items-center border-b-2 border-[#e3e3e3] pb-px text-[#111] " + cols}>
        <span className="pb-px pl-[20px] leading-[43px] text-[#451a8b]">Wed,<br />May 14,<br />2025<br />8:59 AM</span>
        <span className="flex h-[31px] w-[296px] items-center justify-center rounded-[13px] bg-[#5c8fc1] text-[19.500px] font-bold text-white shadow-[0_4px_6px_rgba(0,0,0,0.15)]">Done</span>
        <span className="pb-px leading-[43px] text-[#451a8b]">Immediate<br />scan of IP<br />192.168.75.128</span>
        <span className="flex h-[31px] w-[296px] items-center justify-center rounded-[13px] bg-[#e2352a] text-[19.500px] font-bold text-white shadow-[0_4px_6px_rgba(0,0,0,0.15)]">10.0 (High)</span>
        <span>18</span><span>39</span><span>6</span><span>88</span><span>0</span><span />
      </div>
    </div>
  );
}

function Main() {
  return (
    <main className="w-[2316px] shrink-0 overflow-hidden pl-[66px] text-[#111]">
      <div className="flex h-[120px] items-center pt-[2px]">
        <div className="mb-[25px] flex gap-[10px]">
          <CircleQuestionMark className="h-[39px] w-[39px]" strokeWidth={1.3} />
          <Upload className="h-[39px] w-[39px]" strokeWidth={1.3} />
        </div>
        <span className="ml-[507px] w-[83px] text-[27.2px] font-bold">Filter</span>
        <div className="ml-[10px] h-[62px] w-[831px] rounded-[7px] border-2 border-[#c8c8c8]" />
        <div className="ml-[10px] flex gap-[10.3px]">
          <RefreshCcw className="h-[39px] w-[39px]" strokeWidth={1.3} />
          <CircleX className="h-[39px] w-[39px]" strokeWidth={1.3} />
          <RotateCcw className="h-[39px] w-[39px]" strokeWidth={1.3} />
          <CircleQuestionMark className="h-[39px] w-[39px]" strokeWidth={1.3} />
          <Pencil className="h-[39px] w-[39px]" strokeWidth={1.3} />
        </div>
        <div className="ml-[11px] flex h-[62px] w-[444px] items-center rounded-[7px] border-2 border-[#c8c8c8] pl-[23px] font-['Roboto',sans-serif]">
          --<ChevronsUpDown className="ml-auto mr-[23px] h-[34px] w-[34px] text-[#888]" strokeWidth={1.5} />
        </div>
      </div>
      <div className="flex h-[158px] w-[2221px] items-end border-b-4 border-[#e5e5e5] pb-[35px]">
        <svg viewBox="0 0 98 98" className="-mb-[3px] h-[98px] w-[98px]">
          <circle cx="49" cy="49" r="46" fill="#fff" stroke="#000" strokeWidth="6" />
          <circle cx="49" cy="49" r="28" fill="none" stroke="#000" strokeWidth="3.500" />
          <circle cx="49" cy="49" r="14" fill="none" stroke="#000" strokeWidth="3" />
          <path d="M49 6v43H4" stroke="#555" strokeWidth="2.500" fill="none" />
          <path d="M51 47 64 6q20 6 26 25Z" fill="#000" />
          <rect x="53" y="54" width="43" height="42" fill="#fff" stroke="#000" strokeWidth="5" />
          <path d="M62 66h25M62 78h25" stroke="#000" strokeWidth="6" />
        </svg>
        <h1 className="ml-[9px] text-[35.5px] font-bold leading-[50px]">Reports 1 of 1</h1>
        <svg viewBox="0 0 36 38" className="-mb-[5px] ml-auto h-[38px] w-[36px]"><path d="M19 2H2v34h28V17M30 1v13M23.500 7h12.500" fill="none" stroke="#111" strokeWidth="2.200" /></svg>
        <RotateCcw className="-mb-[5px] ml-[14px] h-[39px] w-[39px]" strokeWidth={1.3} />
      </div>
      <div className="mt-[28px] flex gap-[32px] pl-[16px]">
        <Card title="Reports by Severity Class (Total: 1)"><Pie /></Card>
        <Card title="Reports with High Results"><LineChart /></Card>
        <Card title="Reports by CVSS (Total: 1)"><BarChart /></Card>
      </div>
      <div className="mt-[18px] ml-[1092px] h-[4px] w-[39px] bg-[#b0b0b0]" />
      <div className="mt-[58px]"><Pagination /></div>
      <div className="mt-[32px]"><Table /></div>
      <div className="flex h-[124px] items-start border-b-2 border-[#e3e3e3] pt-[30px]">
        <div className="ml-[1833px] flex h-[63px] w-[444px] shrink-0 items-center rounded-[7px] border-2 border-[#c8c8c8] bg-white pb-px pl-[24px] font-['Roboto',sans-serif] text-[27.5px]">
          Apply to page contents<ChevronsUpDown className="ml-[79px] h-[34px] w-[34px] shrink-0 text-[#777]" strokeWidth={1.5} />
        </div>
      </div>
      <div className="flex h-[56px] items-start pt-[32px]">
        <span className="-mr-[826px] w-[826px] shrink-0 whitespace-nowrap pt-[7px] text-[19.7px] leading-[34px] text-[#6b6b6b]">(Applied filter: apply_overrides=0 min_qod=70 sort-reverse=date first=1 rows=10)</span>
        <Pagination />
      </div>
    </main>
  );
}

export default function App() {
  return (
    <div className="relative flex h-[1860px] w-[2790px] overflow-hidden bg-[#4a4a4a]">
      <div className="flex w-[7px] shrink-0 flex-col overflow-hidden border-r border-[#555] bg-gradient-to-b from-[#1c1c1c] via-black to-black">
        <div className="h-[1032px]" />
        <div className="flex-1 bg-[#8c8b89] pt-[122px] font-['Liberation_Sans',sans-serif] text-[26px] leading-[40px] text-black">
          <div className="-ml-[6px] h-[244px]">s</div>
          <div className="-ml-[7px] h-[190px]">a</div>
          <div className="-ml-[6px] h-[63px]">s</div>
          <div className="-ml-[7px]">o</div>
        </div>
      </div>
      <div className="flex h-full w-[2772px] shrink-0 flex-col overflow-hidden rounded-b-[20px] bg-white">
        <TitleBar />
        <i className="block h-px bg-black" />
        <Panel />
        <TabBar />
        <div className="border-t border-black bg-[#45464b]">
          <Toolbar />
          <Bookmarks />
        </div>
        <i className="block h-px bg-black" />
        <AppHeader />
        <i className="block h-px bg-black" />
        <div className={"relative flex h-[1403px] text-[27.4px] " + DEJAVU}>
          <Sidebar />
          <Main />
          <div className="pointer-events-none absolute inset-x-0 bottom-0 h-[110px] bg-gradient-to-b from-transparent via-black/[0.02] to-black/10" />
        </div>
      </div>
      <div className="flex w-[11px] shrink-0 flex-col overflow-hidden border-l border-[#333] bg-black font-['Liberation_Sans',sans-serif] text-[26px] leading-[40px] text-[#aaa]">
        <div className="h-[67px] bg-[#3a3a3a]" />
        <div className="h-[96px] bg-[#151515]" />
        <div className="h-[76px] border-t-2 border-[#555] bg-[#2c2c2a]" />
        <div className="h-[86px] bg-[#111]" />
        <div className="h-[1240px]" />
        <div className="flex-1 border-t border-[#444] bg-[#1b1b1b] pt-[160px]"><span className="-ml-[4px]">d</span></div>
      </div>
      <div className="absolute left-[2644px] top-[1782px] flex h-[54px] w-[240px] items-center rounded-[9px] border-2 border-[#222] bg-gradient-to-b from-[#6b6a68] to-[#5a5957] pl-[26px] font-['Inter',sans-serif] text-[26px] text-[#f0f0f0]">
        Applications
        <svg viewBox="0 0 32 20" className="absolute left-[88px] top-[50px] h-[20px] w-[32px]">
          <path d="M0 0Q6 1 9 6l7 12 7-12q3-5 9-6Z" fill="#5a5957" /><path d="M0 1Q6 1 9 6l7 12 7-12q3-5 9-5" fill="none" stroke="#222" strokeWidth="2" />
        </svg>
      </div>
    </div>
  );
}
